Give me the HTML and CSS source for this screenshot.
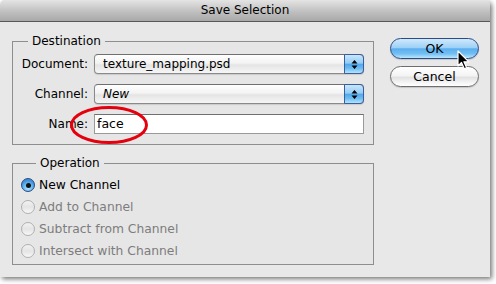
FILE: index.html
```html
<!DOCTYPE html>
<html>
<head>
<meta charset="utf-8">
<link rel="stylesheet" href="styles.css">
</head>
<body>
<div class="window">
  <div class="titlebar">Save Selection</div>
  <div class="content">
    <div class="left">
      <fieldset class="group dest">
        <legend>Destination</legend>
        <div class="form">
          <span class="lbl">Document:</span>
          <div class="popup"><span class="val">texture_mapping.psd</span><span class="stepper"><svg width="7" height="11" viewBox="0 0 7 11"><path d="M0.5 4.5 L3.5 1 L6.5 4.5 Z M0.5 6.5 L3.5 10 L6.5 6.5 Z" fill="#000"/></svg></span></div>
          <span class="lbl">Channel:</span>
          <div class="popup"><span class="val it">New</span><span class="stepper"><svg width="7" height="11" viewBox="0 0 7 11"><path d="M0.5 4.5 L3.5 1 L6.5 4.5 Z M0.5 6.5 L3.5 10 L6.5 6.5 Z" fill="#000"/></svg></span></div>
          <span class="lbl">Name:</span>
          <div class="field">face</div>
        </div>
      </fieldset>
      <fieldset class="group op">
        <legend>Operation</legend>
        <div class="radio on"><span class="dot"></span><span>New Channel</span></div>
        <div class="radio off"><span class="dot"></span><span>Add to Channel</span></div>
        <div class="radio off"><span class="dot"></span><span>Subtract from Channel</span></div>
        <div class="radio off"><span class="dot"></span><span>Intersect with Channel</span></div>
      </fieldset>
    </div>
    <div class="buttons">
      <div class="btn default">OK</div>
      <div class="btn">Cancel</div>
    </div>
  </div>
  <svg class="circle" width="82" height="42" viewBox="0 0 82 42"><ellipse cx="41" cy="21" rx="37.5" ry="17.5" fill="none" stroke="#e5000d" stroke-width="3"/></svg>
  <svg class="cursor" width="14" height="21" viewBox="0 0 14 21"><path d="M1 1 L1 16 L4.5 12.5 L7.3 18.8 L9.6 17.8 L6.9 11.8 L11.8 11.8 Z" fill="#000" stroke="#fff" stroke-width="1.2" stroke-linejoin="round"/></svg>
</div>
</body>
</html>
```

FILE: styles.css
```css
html, body {
  margin: 0;
  padding: 0;
  background: #fff;
}
body {
  width: 496px;
  height: 284px;
  overflow: hidden;
  font-family: "DejaVu Sans", sans-serif;
  font-size: 12px;
  color: #000;
}
.window {
  position: relative;
  width: 490px;
  height: 277px;
  background: #e8e8e8;
  border-radius: 5px 5px 0 0;
  box-shadow: 2px 2px 5px rgba(0, 0, 0, 0.55);
  overflow: hidden;
}
.titlebar {
  height: 21px;
  line-height: 21px;
  text-align: center;
  border-bottom: 1px solid #585858;
  background: linear-gradient(#e4e4e4, #c0c0c0 55%, #a8a8a8);
  color: #000;
}
.content {
  display: flex;
  padding: 11px 11px 0 12px;
}
.left {
  display: flex;
  flex-direction: column;
  gap: 10px;
  width: 362px;
}
.group {
  margin: 0;
  border: 1px solid #8e8e8e;
  min-width: 0;
  background: #e6e6e6;
}
.group legend {
  margin-left: 15px;
  padding: 0 4px;
  line-height: 16px;
}
.dest {
  padding: 5px 9px 10px 0;
}
.form {
  display: grid;
  grid-template-columns: 75px 270px;
  grid-auto-rows: 20px;
  column-gap: 6px;
  row-gap: 10px;
  align-items: center;
}
.lbl {
  text-align: right;
}
.popup {
  display: flex;
  align-items: center;
  height: 20px;
  box-sizing: border-box;
  border: 1px solid #8a8a8a;
  border-top-color: #707070;
  border-radius: 4px;
  background: linear-gradient(#ffffff, #f3f3f3 45%, #e4e4e4 55%, #f6f6f6);
  box-shadow: 0 1px 1px rgba(0, 0, 0, 0.12);
  padding-left: 8px;
}
.val {
  flex: 1;
}
.it {
  font-style: italic;
}
.stepper {
  display: flex;
  align-items: center;
  justify-content: center;
  width: 20px;
  height: 20px;
  margin: -1px -1px -1px 0;
  box-sizing: border-box;
  border: 1px solid #3d5c9e;
  border-radius: 0 4px 4px 0;
  background: linear-gradient(#c9e6fb, #93ccf4 45%, #52a8ec 52%, #6ebdf2 75%, #b4e4fd);
}
.field {
  height: 20px;
  box-sizing: border-box;
  border: 1px solid #9a9a9a;
  border-top-color: #707070;
  background: #fff;
  padding-left: 2px;
  line-height: 18px;
  font-size: 12.5px;
}
.op {
  padding: 3px 0 2px 8px;
}
.radio {
  display: flex;
  align-items: center;
  gap: 4px;
  height: 22px;
  font-size: 12.3px;
}
.radio.off {
  color: #7d7d7d;
}
.dot {
  width: 14px;
  height: 14px;
  box-sizing: border-box;
  border-radius: 50%;
  display: flex;
  align-items: center;
  justify-content: center;
}
.radio.on .dot {
  border: 1px solid #2e4d86;
  background: radial-gradient(circle at 50% 75%, #b5e6ff 0%, #5eb1ef 45%, #3f8fd6 70%), #5aa9ea;
}
.radio.on .dot::after {
  content: "";
  width: 5px;
  height: 5px;
  border-radius: 50%;
  background: #111;
}
.radio.off .dot {
  border: 1px solid #b0b0b0;
  background: linear-gradient(#f2f2f2, #e4e4e4 50%, #f8f8f8);
}
.buttons {
  display: flex;
  flex-direction: column;
  gap: 7px;
  margin-left: 16px;
  padding-top: 5px;
  width: 89px;
}
.btn {
  height: 21px;
  box-sizing: border-box;
  border: 1px solid #6e6e6e;
  border-radius: 11px;
  text-align: center;
  line-height: 19px;
  font-size: 12.5px;
  background: linear-gradient(#ffffff, #f4f4f4 45%, #e2e2e2 55%, #f7f7f7 85%, #ffffff);
  box-shadow: 0 1px 1px rgba(0, 0, 0, 0.15);
}
.btn.default {
  border-color: #2d4a86;
  background: linear-gradient(#cfe9fc, #9ed1f6 45%, #5aaeee 52%, #74bff3 78%, #b9e7fd);
}
.circle {
  position: absolute;
  left: 68px;
  top: 104px;
}
.cursor {
  position: absolute;
  left: 457px;
  top: 50px;
}
```
